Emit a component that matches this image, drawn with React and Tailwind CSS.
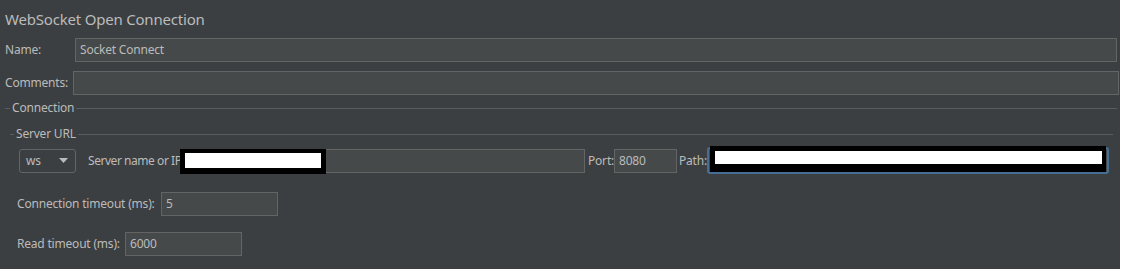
import React from 'react';

const font = { fontFamily: '"Noto Sans", "Open Sans", sans-serif' };

const Field = ({ className = '', value = '', children }) => (
  <div className={`relative h-[24px] border border-[#646464] bg-[#45494a] px-[4px] flex items-center text-[12px] text-[#bbbbbb] ${className}`}>
    {value}
    {children}
  </div>
);

const Legend = ({ title, lead, className = '' }) => (
  <div className={`flex items-center h-[16px] ${className}`}>
    <div className={`h-px bg-[#5a5d5f] ${lead}`} />
    <span className="px-[2px] text-[12px] text-[#bbbbbb] leading-none">{title}</span>
    <div className="h-px flex-1 bg-[#5a5d5f]" />
  </div>
);

const Redacted = ({ className = '', inner = '' }) => (
  <div className={`absolute bg-black ${className}`}>
    <div className={`absolute bg-white ${inner}`} />
  </div>
);

export default function App() {
  return (
    <div className="flex w-[1128px] h-[269px] bg-white tracking-[-0.2px]" style={font}>
      <div className="w-[1120px] h-full bg-[#3c3f41] flex flex-col text-[#bbbbbb]">
        {/* Title */}
        <div className="h-[38px] shrink-0 pl-[5px] pt-[6px] text-[15px] leading-[26px] text-[#bbbbbb]">
          WebSocket Open Connection
        </div>

        {/* Name */}
        <div className="flex items-center pl-[5px] pr-[3px]">
          <span className="w-[70px] text-[12px]">Name:</span>
          <Field className="flex-1" value="Socket Connect" />
        </div>

        {/* Comments */}
        <div className="flex items-center pl-[5px] pr-[1px] mt-[9px]">
          <span className="w-[68px] text-[12px]">Comments:</span>
          <Field className="flex-1" />
        </div>

        {/* Connection group */}
        <Legend title="Connection" lead="w-[5px] ml-[5px]" className="mt-[5px] mr-[3px]" />

        <div className="flex flex-col">
          <Legend title="Server URL" lead="w-[4px] ml-[10px]" className="mt-[10px] mr-[7px]" />

          <div className="flex items-center h-[27px] mt-[5px]">
            {/* Protocol combo */}
            <div className="ml-[19px] w-[57px] h-[24px] border border-[#646464] rounded-[3px] flex items-center justify-between pl-[6px] pr-[7px] text-[12px]">
              <span>ws</span>
              <svg width="9" height="5" viewBox="0 0 9 5">
                <path d="M0 0 L9 0 L4.5 5 Z" fill="#bbbbbb" />
              </svg>
            </div>
            <span className="ml-[12px] w-[92px] text-[12px] whitespace-nowrap tracking-[-0.45px]">Server name or IP</span>
            <Field className="w-[405px]">
              <Redacted className="-left-px -top-px w-[146px] h-[25px]" inner="left-[5px] top-[4px] w-[136px] h-[15px]" />
            </Field>
            <span className="ml-[3px] w-[26px] text-[12px]">Port:</span>
            <Field className="w-[63px]" value="8080" />
            <span className="ml-[2px] w-[28px] text-[12px]">Path:</span>
            <div className="relative w-[402px] h-[27px] border-2 border-[#466d94] rounded-[3px] bg-[#45494a]">
              <Redacted className="left-[1px] -top-[3px] w-[396px] h-[26px]" inner="left-[5px] top-[5px] w-[387px] h-[13px]" />
            </div>
          </div>

          <div className="flex items-center mt-[18px] pl-[17px]">
            <span className="w-[144px] text-[12px] whitespace-nowrap">Connection timeout (ms):</span>
            <Field className="w-[117px]" value="5" />
          </div>

          <div className="flex items-center mt-[16px] pl-[17px]">
            <span className="w-[108px] text-[12px] whitespace-nowrap">Read timeout (ms):</span>
            <Field className="w-[117px]" value="6000" />
          </div>
        </div>
      </div>
    </div>
  );
}
